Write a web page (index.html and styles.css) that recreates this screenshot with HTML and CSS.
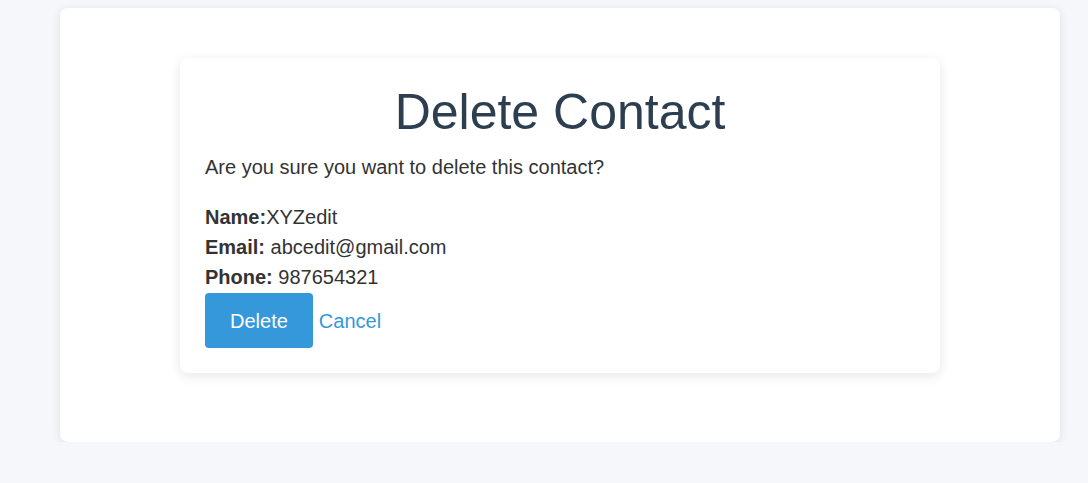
FILE: index.html
```html
<!DOCTYPE html>
<html lang="en">
<head>
<meta charset="utf-8">
<title>Delete Contact</title>
<link rel="stylesheet" href="styles.css">
</head>
<body>
<div class="page">
  <main class="panel">
    <section class="card">
      <h1 class="title">Delete Contact</h1>
      <p class="question">Are you sure you want to delete this contact?</p>
      <div class="details">
        <div><strong>Name:</strong>XYZedit</div>
        <div><strong>Email:</strong> abcedit@gmail.com</div>
        <div><strong>Phone:</strong> 987654321</div>
      </div>
      <div class="actions">
        <button class="btn-delete" type="button">Delete</button>
        <a class="link-cancel" href="#">Cancel</a>
      </div>
    </section>
  </main>
</div>
</body>
</html>
```
FILE: styles.css
```css
html, body {
  margin: 0;
  padding: 0;
}
body {
  background: #f6f7fb;
  font-family: "Liberation Sans", Arial, sans-serif;
  color: #333333;
  font-size: 20px;
  line-height: 30px;
}
.page {
  padding: 8px 0 0 60px;
}
.panel {
  width: 1000px;
  height: 434px;
  box-sizing: border-box;
  background: #ffffff;
  border-radius: 8px;
  box-shadow: 0 2px 10px rgba(0, 0, 0, 0.1);
  padding-top: 50px;
}
.card {
  width: 760px;
  margin: 0 auto;
  box-sizing: border-box;
  background: #ffffff;
  border-radius: 8px;
  box-shadow: 0 3px 12px rgba(0, 0, 0, 0.1);
  padding: 25px;
}
.title {
  margin: 0 0 10px;
  font-size: 50px;
  font-weight: normal;
  line-height: 59px;
  text-align: center;
  color: #2c3e50;
}
.question {
  margin: 0 0 20px;
}
.details {
  display: flex;
  flex-direction: column;
}
.details strong {
  font-weight: bold;
}
.actions {
  display: flex;
  align-items: center;
  gap: 6px;
  margin-top: 1px;
}
.btn-delete {
  font-family: inherit;
  font-size: 20px;
  line-height: 25px;
  padding: 16px 25px 14px;
  border: none;
  border-radius: 4px;
  background: #3498db;
  color: #ffffff;
  cursor: pointer;
}
.link-cancel {
  color: #3498db;
  text-decoration: none;
  font-size: 20px;
}
```
